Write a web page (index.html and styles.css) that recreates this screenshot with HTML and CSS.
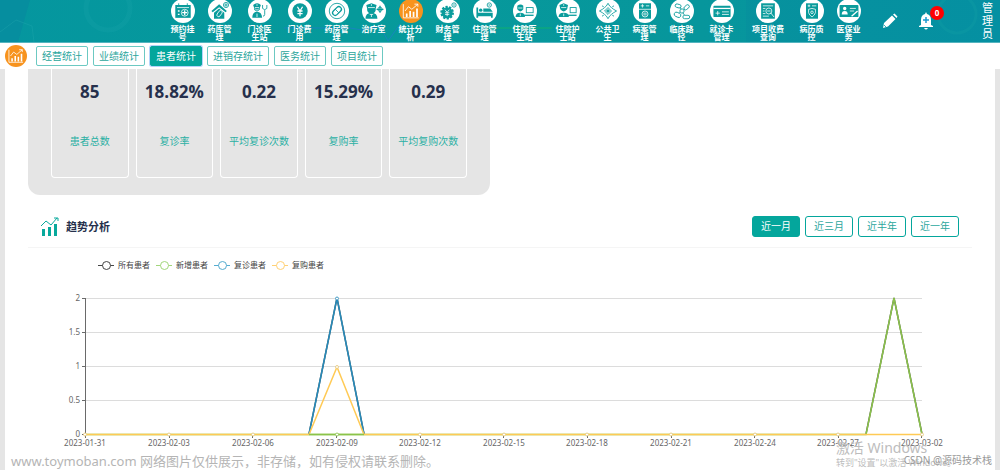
FILE: index.html
```html
<!DOCTYPE html>
<html lang="zh-CN">
<head>
<meta charset="utf-8">
<title>患者统计</title>
<link rel="stylesheet" href="styles.css">
</head>
<body>
<header class="topbar">
  <svg class="topbar-art" viewBox="0 0 1000 42" preserveAspectRatio="xMidYMid slice" aria-hidden="true">
    <path d="M0 0H30L18 42H0z" fill="#0786a0" opacity=".5"/>
    <path d="M0 32L16 20 32 26 34 42" fill="none" stroke="#25a9b0" opacity=".35"/>
    <circle cx="108" cy="8" r="22" fill="none" stroke="#17a3a8" stroke-width="5" opacity=".3"/>
    <circle cx="957" cy="14" r="19" fill="none" stroke="#12a3a6" stroke-width="3" opacity=".4"/>
    <path d="M284 28H350L362 30 380 26 388 41 400 24" fill="none" stroke="#2478d4" opacity=".6"/>
    <path d="M486 28H552" stroke="#12b765" opacity=".8"/>
    <path d="M746 0H1000V42H746z" fill="#0783a0" opacity=".22"/>
  </svg>
  <nav class="menu">
    <a class="menu-item" href="#"><svg class="disc" viewBox="-2 -2 28 28"><circle class="plate" cx="12" cy="12" r="14"/><path class="f" d="M3 5h18v15H3z"/><path class="s" d="M7 3v3M17 3v3"/><path class="w" d="M5 8h14"/><path class="w bold" d="M6 12h2M6 16h2M14 11v6M11 14h6"/><circle class="w" cx="14" cy="14" r="4"/></svg><span>预约挂号</span></a>
    <a class="menu-item" href="#"><svg class="disc" viewBox="-2 -2 28 28"><circle class="plate" cx="12" cy="12" r="14"/><path class="f" d="M2 12l9-8 9 8-1.500 1.500L11 7.500l-7.500 6zM5 14l6-5 6 5v7H5z"/><rect class="w" x="9.500" y="11" width="4" height="8" rx="2" transform="rotate(35 11.500 15)"/><circle class="s" cx="19" cy="5" r="3"/><path class="s" d="M19 3v4M17 5h4"/></svg><span>药库管理</span></a>
    <a class="menu-item wide" href="#"><svg class="disc" viewBox="-2 -2 28 28"><circle class="plate" cx="12" cy="12" r="14"/><path class="f" d="M4 5q5-4 9 0l-1 3v2q-3.500 5-7 0V8zM3 20q0-7 5.500-7t6 7z"/><path class="w" d="M6 8h5M8.500 4v2M8.500 15v4M6 9q2.500 4 5 0"/><path class="s" d="M15 5v4q2.500 3 5 0V5M17.500 11v5q0 2-2 2"/></svg><span>门诊医生站</span></a>
    <a class="menu-item" href="#"><svg class="disc" viewBox="-2 -2 28 28"><circle class="plate" cx="12" cy="12" r="14"/><circle class="f" cx="12" cy="12" r="9"/><path class="w bold" d="M9 7l3 5 3-5M12 12v6M9 12h6M9 15h6"/></svg><span>门诊费用</span></a>
    <a class="menu-item" href="#"><svg class="disc" viewBox="-2 -2 28 28"><circle class="plate" cx="12" cy="12" r="14"/><circle class="s" cx="12" cy="12" r="9"/><rect class="s bold" x="9" y="6" width="6" height="12" rx="3" transform="rotate(45 12 12)"/><path class="s" d="M10 10l4 4"/></svg><span>药房管理</span></a>
    <a class="menu-item" href="#"><svg class="disc" viewBox="-2 -2 28 28"><circle class="plate" cx="12" cy="12" r="14"/><path class="f" d="M3 5l6-2 6 2-1 4v2q-1 4-5 4T4 11V9zM2 21q0-7 7-7t7 7z"/><path class="w" d="M5 8h8M9 16v3M9 4v2M7 16h4"/><circle class="s" cx="19" cy="10" r="2.500"/><path class="s bold" d="M19 6v8M15 10h8"/></svg><span>治疗室</span></a>
    <a class="menu-item current" href="#" aria-current="page"><svg class="disc" viewBox="-2 -2 28 28"><circle class="plate" cx="12" cy="12" r="14"/><path class="s" d="M3 4v16h18M5 12l4-5 4 3 7-6M16 4h4v3"/><path class="s bars" d="M7 19v-4M11 19v-7M15 19v-6M19 19V9"/></svg><span>统计分析</span></a>
    <a class="menu-item" href="#"><svg class="disc" viewBox="-2 -2 28 28"><circle class="plate" cx="12" cy="12" r="14"/><circle class="f" cx="11" cy="14" r="6.500"/><circle class="s teeth" cx="11" cy="14" r="6.500"/><path class="w" d="M8.500 10.500l2.500 3 2.500-3M11 13.500V18M8.500 14h5M8.500 16h5"/><circle class="s" cx="19" cy="5" r="2.500"/><path class="s" d="M18 5h2"/></svg><span>财务管理</span></a>
    <a class="menu-item" href="#"><svg class="disc" viewBox="-2 -2 28 28"><circle class="plate" cx="12" cy="12" r="14"/><path class="f" d="M2 8h2v6h17v6h-2v-2H4v2H2zM10 9h8l3 4H10z"/><circle class="f" cx="7" cy="11" r="2"/><circle class="s" cx="17" cy="5" r="2.500"/><path class="s" d="M16 5h2"/></svg><span>住院管理</span></a>
    <a class="menu-item wide" href="#"><svg class="disc" viewBox="-2 -2 28 28"><circle class="plate" cx="12" cy="12" r="14"/><path class="f" d="M3 6q4-3 7 0v4q-3.500 5-7 0zM1 19q0-5 5.500-5t5.500 5z"/><path class="w" d="M4 8.500h5M6.500 15v3"/><rect class="s" x="13.500" y="8" width="8" height="6"/><path class="s bold" d="M11 17h11"/></svg><span>住院医生站</span></a>
    <a class="menu-item wide" href="#"><svg class="disc" viewBox="-2 -2 28 28"><circle class="plate" cx="12" cy="12" r="14"/><path class="f" d="M2 5l5-2 5 2-1 5q-4 5-8 0zM1 19q0-5 6-5t6 5z"/><path class="w" d="M4 8h6M7 15v3M7 4v2"/><rect class="s" x="14.500" y="8" width="7" height="6"/><path class="s bold" d="M12 17h10"/></svg><span>住院护士站</span></a>
    <a class="menu-item" href="#"><svg class="disc" viewBox="-2 -2 28 28"><circle class="plate" cx="12" cy="12" r="14"/><path class="s" d="M12 3q2 4 4 5 2 2 6 4-4 2-6 4-2 1-4 5-2-4-4-5-2-2-6-4 4-2 6-4 2-1 4-5z"/><path class="s" d="M12 8l4 4-4 4-4-4z"/><path class="s bold" d="M12 10v4M10 12h4"/><path class="s" d="M5 6l2 1M19 6l-2 1M5 18l2-1M19 18l-2-1"/></svg><span>公共卫生</span></a>
    <a class="menu-item" href="#"><svg class="disc" viewBox="-2 -2 28 28"><circle class="plate" cx="12" cy="12" r="14"/><path class="f" d="M5 3h14v18H5z"/><path class="w" d="M7 6h4M9 4v4M13 6h4M5 10h14"/><circle class="w" cx="12" cy="15.500" r="3.500"/><path class="w" d="M10 14.500h4M10 16.500h4"/></svg><span>病案管理</span></a>
    <a class="menu-item" href="#"><svg class="disc" viewBox="-2 -2 28 28"><circle class="plate" cx="12" cy="12" r="14"/><g class="s"><rect x="4" y="4" width="7" height="4" rx="2" transform="rotate(15 7 6)"/><rect x="14" y="6" width="7" height="4" rx="2" transform="rotate(-40 17 8)"/><circle cx="12" cy="12" r="2.500"/><rect x="3" y="14" width="8" height="5" rx="2.500" transform="rotate(25 7 16)"/><rect x="13" y="17" width="8" height="4" rx="2"/><path d="M10 8l1 2M14 11l1-1M9 14l1-1M13 14l2 3"/></g></svg><span>临床路径</span></a>
    <a class="menu-item wide" href="#"><svg class="disc" viewBox="-2 -2 28 28"><circle class="plate" cx="12" cy="12" r="14"/><rect class="f" x="2" y="6" width="20" height="13" rx="1"/><path class="w bold" d="M2 9h20"/><path class="w" d="M7 12v5M4.500 14.500h5M12 13h8M12 16h8"/></svg><span>就诊卡管理</span></a>
    <a class="menu-item extra" href="#"><svg class="disc" viewBox="-2 -2 28 28"><circle class="plate" cx="12" cy="12" r="14"/><path class="f" d="M4 3h16v18H4z"/><path class="w" d="M6 6h12M6 9h3M6 12h2M6 15h3M6 18h7M15 14l4 5"/><circle class="w" cx="13" cy="12" r="3.500"/><path class="w" d="M11 12h4"/></svg><span>项目收费查询</span></a>
    <a class="menu-item" href="#"><svg class="disc" viewBox="-2 -2 28 28"><circle class="plate" cx="12" cy="12" r="14"/><path class="f" d="M5 3h14v18H5z"/><path class="w" d="M7 6h3M8.500 4.500v3M12 6h5M8 10l4-1 4 1v4q-1 3-4 5-3-2-4-5z"/><circle class="w" cx="12" cy="13.500" r="1.500"/></svg><span>病历质控</span></a>
    <a class="menu-item" href="#"><svg class="disc" viewBox="-2 -2 28 28"><circle class="plate" cx="12" cy="12" r="14"/><rect class="f" x="1" y="5" width="22" height="14" rx="1"/><path d="M3.500 16q0-4 3.500-4t3.500 4zM5 9a2 2 0 1 1 4 0 2 2 0 1 1-4 0" fill="#fff"/><path class="w" d="M13 9h7M13 12h5"/><path class="w bold" d="M15 18l7-6"/></svg><span>医保业务</span></a>
  </nav>
  <div class="tools">
    <button class="tool" type="button" aria-label="编辑"><svg class="pencil" viewBox="0 0 16 16"><path d="M1 15l1-5L10 2.500l3.500 3.500L6 13.500zM11 1.500l1.500-1 3 3-1 1.500z" fill="#fff"/><path d="M2 12l2 2" stroke="#079aa2" stroke-width=".8"/></svg></button>
    <button class="tool bell-wrap" type="button" aria-label="通知 0"><svg class="bell" viewBox="0 0 14 18"><path d="M7 0l1 2q4 1 4 6v5l2 1v1H0v-1l2-1V8q0-5 4-6zM5 16h4q-2 3-4 0z" fill="#fff"/><path d="M7 5v6M4 8h6" stroke="#1c9bd0" stroke-width="1.500"/></svg><span class="badge">0</span></button>
    <button class="user" type="button">管理员</button>
  </div>
</header>

<div class="tabs">
  <svg class="disc section-icon" viewBox="-2 -2 28 28" aria-hidden="true"><circle class="plate" cx="12" cy="12" r="14"/><path class="s" d="M3 4v16h18M5 12l4-5 4 3 7-6M16 4h4v3"/><path class="s bars" d="M7 19v-4M11 19v-7M15 19v-6M19 19V9"/></svg>
  <button class="tab" type="button">经营统计</button>
  <button class="tab" type="button">业绩统计</button>
  <button class="tab active" type="button">患者统计</button>
  <button class="tab" type="button">进销存统计</button>
  <button class="tab" type="button">医务统计</button>
  <button class="tab" type="button">项目统计</button>
</div>

<main class="page">
  <section class="summary">
    <div class="card"><strong>85</strong><span>患者总数</span></div>
    <div class="card"><strong>18.82%</strong><span>复诊率</span></div>
    <div class="card"><strong>0.22</strong><span>平均复诊次数</span></div>
    <div class="card"><strong>15.29%</strong><span>复购率</span></div>
    <div class="card"><strong>0.29</strong><span>平均复购次数</span></div>
  </section>

  <section class="trend">
    <div class="trend-head">
      <svg class="trend-icon" viewBox="0 0 18 20" aria-hidden="true"><path d="M1 12h3v7H1zM7 10h3v9H7zM13 7h3v12h-3z" fill="#08a99c"/><path d="M0 9l5-5 5 4 6-7M13 1h4v3" fill="none" stroke="#08a99c"/></svg>
      <h2>趋势分析</h2>
      <div class="ranges">
        <button class="range active" type="button">近一月</button>
        <button class="range" type="button">近三月</button>
        <button class="range" type="button">近半年</button>
        <button class="range" type="button">近一年</button>
      </div>
    </div>
    <ul class="legend">
      <li class="all"><i></i>所有患者</li>
      <li class="new"><i></i>新增患者</li>
      <li class="revisit"><i></i>复诊患者</li>
      <li class="rebuy"><i></i>复购患者</li>
    </ul>
    <svg class="chart" viewBox="5 271 990 199" role="img" aria-label="趋势分析">
      <path class="grid" d="M85 298.500H922M85 332.500H922M85 366.500H922M85 400.500H922"/>
      <path class="axis" d="M85.500 298V434.500H922M82 298.500h4M82 332.500h4M82 366.500h4M82 400.500h4M82 434.500h4M85.500 434v4M169.500 434v4M252.500 434v4M336.500 434v4M420.500 434v4M503.500 434v4M587.500 434v4M671.500 434v4M754.500 434v4M838.500 434v4M921.500 434v4"/>
      <g class="y-labels"><text x="80" y="301">2</text><text x="80" y="335">1.5</text><text x="80" y="369">1</text><text x="80" y="403">0.5</text><text x="80" y="437">0</text></g>
      <path class="line navy" d="M309 434L337 298 364 434M866 434L894 298 922 434"/>
      <path class="line green" d="M85 434.500H866L894 298 922 434.500"/>
      <path class="line blue" d="M309 434L337 298 364 434"/>
      <path class="line yellow" d="M85 434.500H309L337 367 364 434.500H922"/>
      <path class="line green" d="M309 434.500H364"/>
      <g class="dots"><circle cx="85" cy="434.500" r="1.500"/><circle cx="169" cy="434.500" r="1.500"/><circle cx="253" cy="434.500" r="1.500"/><circle cx="337" cy="367" r="1.500"/><circle cx="420" cy="434.500" r="1.500"/><circle cx="504" cy="434.500" r="1.500"/><circle cx="587" cy="434.500" r="1.500"/><circle cx="671" cy="434.500" r="1.500"/><circle cx="755" cy="434.500" r="1.500"/><circle cx="838" cy="434.500" r="1.500"/><circle cx="922" cy="434.500" r="1.500"/></g>
      <circle class="dot-blue" cx="337" cy="298.500" r="1.500"/><circle class="dot-green" cx="337" cy="434.500" r="1.500"/>
      <g class="x-labels"><text x="85" y="446">2023-01-31</text><text x="169" y="446">2023-02-03</text><text x="253" y="446">2023-02-06</text><text x="337" y="446">2023-02-09</text><text x="420" y="446">2023-02-12</text><text x="504" y="446">2023-02-15</text><text x="587" y="446">2023-02-18</text><text x="671" y="446">2023-02-21</text><text x="755" y="446">2023-02-24</text><text x="838" y="446">2023-02-27</text><text x="922" y="446">2023-03-02</text></g>
    </svg>
  </section>
</main>

<p class="mark mark-site"><span class="domain">www.toymoban.com</span> 网络图片仅供展示，非存储，如有侵权请联系删除。</p>
<p class="mark mark-windows"><span class="mark-title">激活 Windows</span><span>转到"设置"以激活 Windows。</span></p>
<p class="mark mark-author">CSDN @源码技术栈</p>
</body>
</html>
```

FILE: styles.css
```css
* { box-sizing: border-box; }
body {
  margin: 0;
  background: #e5e5e5;
  color: #26304c;
  font-family: "Noto Sans", "Noto Sans CJK SC", sans-serif;
  font-size: 10px;
}
button {
  font-family: inherit;
  padding: 0;
  cursor: pointer;
}
.topbar {
  position: relative;
  display: flex;
  justify-content: space-between;
  height: 43px;
  padding: 0 7px 0 164px;
  overflow: hidden;
  background: linear-gradient(90deg, #05969f, #069a9b 35%, #07969c 70%, #0594a3);
  border-bottom: 1px solid #55b4bf;
}
.topbar-art {
  position: absolute;
  inset: 0;
  width: 100%;
  height: 100%;
}
.menu {
  position: relative;
  display: flex;
}
.menu-item {
  display: flex;
  flex-direction: column;
  align-items: center;
  width: 37px;
  padding: 0 6px;
  color: #fff;
  font-size: 8px;
  font-weight: 700;
  line-height: 8px;
  text-align: center;
  text-decoration: none;
  word-break: break-all;
}
.menu-item.wide { width: 43px; padding: 0 9px; }
.menu-item.extra { width: 50px; padding: 0 8px; }
.disc {
  flex: none;
  width: 24px;
  height: 24px;
  margin: -1px 0 2px;
}
.plate { fill: #fff; }
.f { fill: #0a9c9c; }
.s { fill: none; stroke: #0a9c9c; }
.w { fill: none; stroke: #fff; stroke-width: .9; }
.bold { stroke-width: 1.5; }
.teeth { stroke-width: 3; stroke-dasharray: 2.500 1.500; }
.bars { stroke-width: 2; }
.current .plate, .section-icon .plate { fill: #f7931e; }
.current .s, .section-icon .s { stroke: #fff; }
.tools {
  position: relative;
  display: flex;
  align-items: center;
}
.tool, .user {
  border: 0;
  background: none;
  color: #fff;
}
.pencil { display: block; width: 16px; height: 16px; }
.bell-wrap { position: relative; margin: 0 49px 0 21px; }
.bell { display: block; width: 14px; height: 18px; }
.badge {
  position: absolute;
  top: -6px;
  left: 11px;
  width: 14px;
  height: 14px;
  border-radius: 50%;
  background: #f00;
  font-size: 8px;
  font-weight: 700;
  line-height: 14px;
  text-align: center;
}
.user {
  align-self: flex-start;
  width: 11px;
  font-size: 11px;
  line-height: 13px;
  word-break: break-all;
  margin-top: 1px;
}
.tabs {
  display: flex;
  align-items: center;
  gap: 5px;
  height: 26px;
  padding: 0 5px;
  background: #fff;
}
.section-icon {
  width: 22px;
  height: 22px;
  margin: 0 4px 0 0;
}
.tab {
  height: 20px;
  padding: 0 5px;
  border: 1px solid #6cc9c2;
  border-radius: 2px;
  background: #fff;
  color: #2ba69c;
  font-size: 10px;
  line-height: 18px;
}
.tab.active {
  border-color: #04a69c;
  background: #04a69c;
  box-shadow: 0 0 0 1px #b3d4fb;
  color: #fff;
}
.page {
  margin: 0 5px;
  padding: 0 23px;
  background: #fff;
}
.summary {
  display: flex;
  gap: 7px;
  max-width: 462px;
  padding: 0 23px 17px;
  border-radius: 0 0 12px 12px;
  background: #e5e5e5;
}
.card {
  display: flex;
  flex: 1;
  flex-direction: column;
  align-items: center;
  padding: 11px 0 29px;
  border: 1px solid #fff;
  border-top: 0;
  border-radius: 0 0 4px 4px;
}
.card strong {
  font-family: "Open Sans", "Noto Sans", sans-serif;
  font-size: 17px;
  line-height: 24px;
}
.card span {
  margin-top: 30px;
  color: #2bb0a4;
  line-height: 14px;
  white-space: nowrap;
}
.trend-head {
  display: flex;
  align-items: center;
  padding: 21px 13px 10px;
  border-bottom: 1px solid #f5f5f5;
}
.trend-icon { width: 18px; height: 20px; }
.trend-head h2 {
  margin: 0 0 0 7px;
  font-size: 11px;
  line-height: 16px;
}
.ranges { display: flex; gap: 5px; margin-left: auto; }
.range {
  width: 48px;
  height: 21px;
  border: 1px solid #04a69c;
  border-radius: 3px;
  background: #fff;
  color: #2ba69c;
  font-size: 10px;
  line-height: 19px;
}
.range.active { background: #04a69c; color: #fff; }
.legend {
  display: flex;
  gap: 6px;
  margin: 0;
  padding: 11px 70px 0;
  list-style: none;
  color: #444;
  font-size: 8px;
  line-height: 12px;
}
.legend li { display: flex; align-items: center; gap: 4px; }
.legend i {
  display: flex;
  align-items: center;
  width: 16px;
  height: 9px;
  background: linear-gradient(currentColor, currentColor) center / 100% 1px no-repeat;
}
.legend i::before {
  content: "";
  box-sizing: border-box;
  width: 9px;
  height: 9px;
  margin: 0 auto;
  border: 1px solid;
  border-radius: 50%;
  background: #fff;
}
.all i { color: #444; }
.new i { color: #a2d67b; }
.revisit i { color: #55acd0; }
.rebuy i { color: #ffd175; }
.chart {
  display: block;
  width: calc(100% + 46px);
  margin: 0 -23px;
}
.grid { stroke: #dcdcdc; }
.axis { fill: none; stroke: #6a6a6a; }
.y-labels, .x-labels { fill: #666; font-size: 8px; }
.y-labels { text-anchor: end; }
.x-labels { text-anchor: middle; }
.line { fill: none; stroke-width: 1.5; }
.navy { stroke: #555; }
.green { stroke: #8bc34a; }
.blue { stroke: #268bbb; }
.yellow { stroke: #ffca55; }
.dots circle, .dot-blue, .dot-green { fill: #fff; stroke: #e4c678; stroke-width: .8; }
.dot-blue { stroke: #268bbb; }
.dot-green { stroke: #8bc34a; }
.mark {
  position: absolute;
  margin: 0;
  color: #a9a9a9;
  white-space: nowrap;
}
.mark-site { left: 11px; bottom: 0; color: #b5b5b5; font-size: 13px; line-height: 18px; }
.mark-windows {
  right: 44px;
  bottom: 0;
  display: flex;
  flex-direction: column;
  color: #bdbdbd;
  font-size: 9px;
  line-height: 14px;
}
.mark-title { font-size: 14px; line-height: 16px; }
.mark-author { right: 8px; bottom: 2px; color: #999; font-size: 10px; line-height: 16px; }
```
